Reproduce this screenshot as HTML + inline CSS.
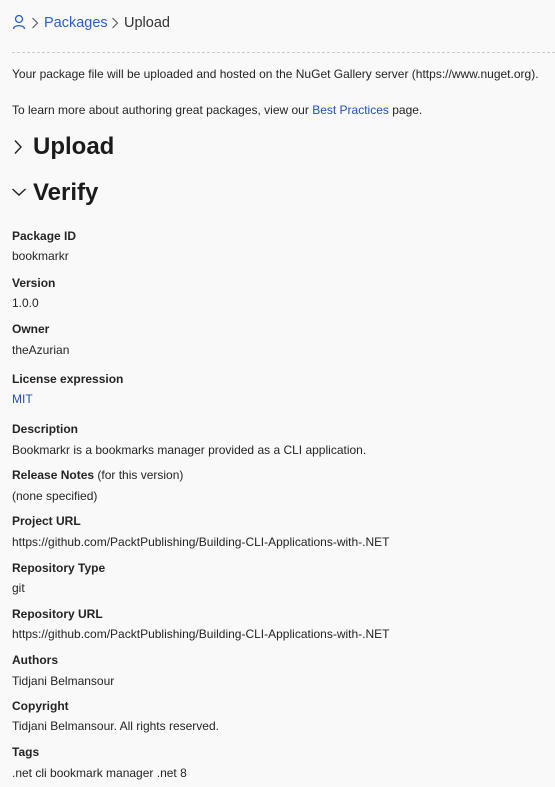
<!DOCTYPE html>
<html><head><meta charset="utf-8"><style>
html,body{margin:0;padding:0;background:#f9f9f9;width:555px;height:787px;overflow:hidden;font-family:"Liberation Sans",sans-serif;color:#242424}
.a{position:absolute;left:12px;font-size:12px;line-height:16px;white-space:nowrap}
.b{font-weight:bold}
a{color:#1f4fbf;text-decoration:none}
.h{position:absolute;left:33px;font-size:24px;font-weight:bold;line-height:30px;color:#1b1b1b}
svg{position:absolute}
.bc{position:absolute;top:14px;font-size:14.5px;line-height:18px;color:#333}
</style></head><body>
<svg style="left:12px;top:14px" width="14" height="16" viewBox="0 0 14 16"><circle cx="7" cy="5" r="3.5" fill="none" stroke="#2b5fd0" stroke-width="1.3"/><path d="M1.5 15 C1.5 10.5 12.5 10.5 12.5 15" fill="none" stroke="#2b5fd0" stroke-width="1.3"/></svg>
<svg style="left:31px;top:17px" width="8" height="12" viewBox="0 0 8 12"><path d="M1.5 1 L6.5 6 L1.5 11" fill="none" stroke="#555" stroke-width="1.1"/></svg>
<div class="bc" style="left:44px"><a href="#" style="color:#2b5fd0">Packages</a></div>
<svg style="left:111px;top:17px" width="8" height="12" viewBox="0 0 8 12"><path d="M1.5 1 L6.5 6 L1.5 11" fill="none" stroke="#555" stroke-width="1.1"/></svg>
<div class="bc" style="left:124px">Upload</div>
<div style="position:absolute;left:12px;right:0;top:52px;border-top:1px dashed #ccc"></div>
<div class="a" style="top:66px">Your package file will be uploaded and hosted on the NuGet Gallery server (https://www.nuget.org).</div>
<div class="a" style="top:102px">To learn more about authoring great packages, view our <a href="#">Best Practices</a> page.</div>
<svg style="left:13px;top:139px" width="10" height="16" viewBox="0 0 10 16"><path d="M2 1.5 L8 8 L2 14.5" fill="none" stroke="#222" stroke-width="1.4"/></svg>
<div class="h" style="top:132px">Upload</div>
<svg style="left:11px;top:187px" width="16" height="10" viewBox="0 0 16 10"><path d="M1.5 2 L8 8 L14.5 2" fill="none" stroke="#222" stroke-width="1.4"/></svg>
<div class="h" style="top:178px">Verify</div>
<div class="a b" style="top:228px">Package ID</div><div class="a" style="top:248px">bookmarkr</div>
<div class="a b" style="top:275px">Version</div><div class="a" style="top:295px">1.0.0</div>
<div class="a b" style="top:321px">Owner</div><div class="a" style="top:342px">theAzurian</div>
<div class="a b" style="top:371px">License expression</div><div class="a" style="top:391px"><a href="#">MIT</a></div>
<div class="a b" style="top:421px">Description</div><div class="a" style="top:442px">Bookmarkr is a bookmarks manager provided as a CLI application.</div>
<div class="a" style="top:467px"><b>Release Notes</b> (for this version)</div><div class="a" style="top:488px">(none specified)</div>
<div class="a b" style="top:513px">Project URL</div><div class="a" style="top:534px">https://github.com/PacktPublishing/Building-CLI-Applications-with-.NET</div>
<div class="a b" style="top:560px">Repository Type</div><div class="a" style="top:580px">git</div>
<div class="a b" style="top:606px">Repository URL</div><div class="a" style="top:626px">https://github.com/PacktPublishing/Building-CLI-Applications-with-.NET</div>
<div class="a b" style="top:652px">Authors</div><div class="a" style="top:673px">Tidjani Belmansour</div>
<div class="a b" style="top:698px">Copyright</div><div class="a" style="top:718px">Tidjani Belmansour. All rights reserved.</div>
<div class="a b" style="top:744px">Tags</div><div class="a" style="top:765px">.net cli bookmark manager .net 8</div>
</body></html>
